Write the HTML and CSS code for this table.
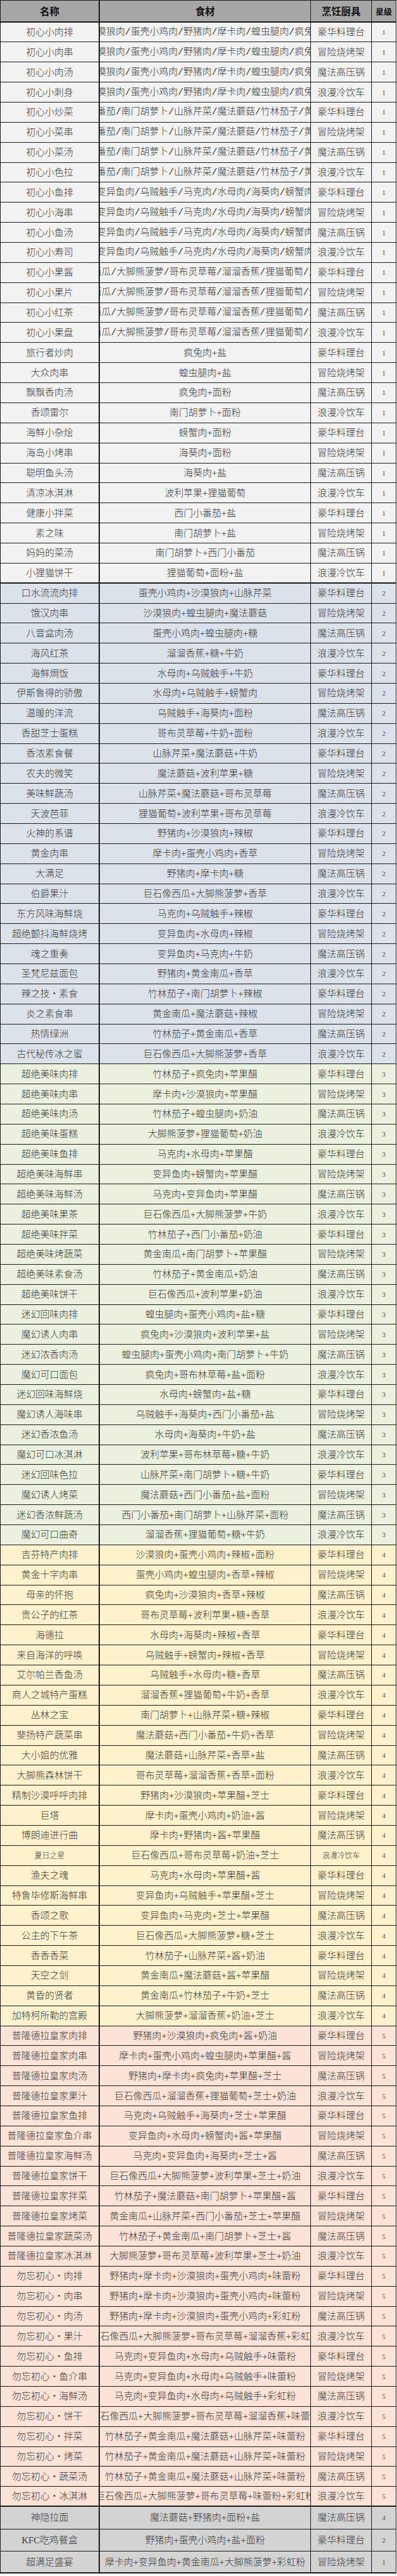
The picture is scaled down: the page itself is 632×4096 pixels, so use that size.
FILE: index.html
```html
<!DOCTYPE html>
<html lang="zh-CN">
<head>
<meta charset="utf-8">
<title>料理配方</title>
<link rel="stylesheet" href="styles.css">
</head>
<body>
<div class="sheet">
  <div class="row head"><div class="cell name">名称</div><div class="cell ing">食材</div><div class="cell tool">烹饪厨具</div><div class="cell star">星级</div></div>

  <div class="row s1"><div class="cell name">初心小肉排</div><div class="cell ing multi">沙漠狼肉/蛋壳小鸡肉/野猪肉/摩卡肉/蝗虫腿肉/疯兔肉</div><div class="cell tool">豪华料理台</div><div class="cell star">1</div></div>
  <div class="row s1"><div class="cell name">初心小肉串</div><div class="cell ing multi">沙漠狼肉/蛋壳小鸡肉/野猪肉/摩卡肉/蝗虫腿肉/疯兔肉</div><div class="cell tool">冒险烧烤架</div><div class="cell star">1</div></div>
  <div class="row s1"><div class="cell name">初心小肉汤</div><div class="cell ing multi">沙漠狼肉/蛋壳小鸡肉/野猪肉/摩卡肉/蝗虫腿肉/疯兔肉</div><div class="cell tool">魔法高压锅</div><div class="cell star">1</div></div>
  <div class="row s1"><div class="cell name">初心小刺身</div><div class="cell ing multi">沙漠狼肉/蛋壳小鸡肉/野猪肉/摩卡肉/蝗虫腿肉/疯兔肉</div><div class="cell tool">浪漫冷饮车</div><div class="cell star">1</div></div>
  <div class="row s1"><div class="cell name">初心小炒菜</div><div class="cell ing multi">西门小番茄/南门胡萝卜/山脉芹菜/魔法蘑菇/竹林茄子/黄金南瓜</div><div class="cell tool">豪华料理台</div><div class="cell star">1</div></div>
  <div class="row s1"><div class="cell name">初心小菜串</div><div class="cell ing multi">西门小番茄/南门胡萝卜/山脉芹菜/魔法蘑菇/竹林茄子/黄金南瓜</div><div class="cell tool">冒险烧烤架</div><div class="cell star">1</div></div>
  <div class="row s1"><div class="cell name">初心小菜汤</div><div class="cell ing multi">西门小番茄/南门胡萝卜/山脉芹菜/魔法蘑菇/竹林茄子/黄金南瓜</div><div class="cell tool">魔法高压锅</div><div class="cell star">1</div></div>
  <div class="row s1"><div class="cell name">初心小色拉</div><div class="cell ing multi">西门小番茄/南门胡萝卜/山脉芹菜/魔法蘑菇/竹林茄子/黄金南瓜</div><div class="cell tool">浪漫冷饮车</div><div class="cell star">1</div></div>
  <div class="row s1"><div class="cell name">初心小鱼排</div><div class="cell ing multi">变异鱼肉/乌贼触手/马克肉/水母肉/海葵肉/螃蟹肉</div><div class="cell tool">豪华料理台</div><div class="cell star">1</div></div>
  <div class="row s1"><div class="cell name">初心小海串</div><div class="cell ing multi">变异鱼肉/乌贼触手/马克肉/水母肉/海葵肉/螃蟹肉</div><div class="cell tool">冒险烧烤架</div><div class="cell star">1</div></div>
  <div class="row s1"><div class="cell name">初心小鱼汤</div><div class="cell ing multi">变异鱼肉/乌贼触手/马克肉/水母肉/海葵肉/螃蟹肉</div><div class="cell tool">魔法高压锅</div><div class="cell star">1</div></div>
  <div class="row s1"><div class="cell name">初心小寿司</div><div class="cell ing multi">变异鱼肉/乌贼触手/马克肉/水母肉/海葵肉/螃蟹肉</div><div class="cell tool">浪漫冷饮车</div><div class="cell star">1</div></div>
  <div class="row s1"><div class="cell name">初心小果酱</div><div class="cell ing multi">巨石像西瓜/大脚熊菠萝/哥布灵草莓/溜溜香蕉/狸猫葡萄/波利苹果</div><div class="cell tool">豪华料理台</div><div class="cell star">1</div></div>
  <div class="row s1"><div class="cell name">初心小果片</div><div class="cell ing multi">巨石像西瓜/大脚熊菠萝/哥布灵草莓/溜溜香蕉/狸猫葡萄/波利苹果</div><div class="cell tool">冒险烧烤架</div><div class="cell star">1</div></div>
  <div class="row s1"><div class="cell name">初心小红茶</div><div class="cell ing multi">巨石像西瓜/大脚熊菠萝/哥布灵草莓/溜溜香蕉/狸猫葡萄/波利苹果</div><div class="cell tool">魔法高压锅</div><div class="cell star">1</div></div>
  <div class="row s1"><div class="cell name">初心小果盘</div><div class="cell ing multi">巨石像西瓜/大脚熊菠萝/哥布灵草莓/溜溜香蕉/狸猫葡萄/波利苹果</div><div class="cell tool">浪漫冷饮车</div><div class="cell star">1</div></div>
  <div class="row s1"><div class="cell name">旅行者炒肉</div><div class="cell ing">疯兔肉+盐</div><div class="cell tool">豪华料理台</div><div class="cell star">1</div></div>
  <div class="row s1"><div class="cell name">大众肉串</div><div class="cell ing">蝗虫腿肉+盐</div><div class="cell tool">冒险烧烤架</div><div class="cell star">1</div></div>
  <div class="row s1"><div class="cell name">飘飘香肉汤</div><div class="cell ing">疯兔肉+面粉</div><div class="cell tool">魔法高压锅</div><div class="cell star">1</div></div>
  <div class="row s1"><div class="cell name">香颂雷尔</div><div class="cell ing">南门胡萝卜+面粉</div><div class="cell tool">浪漫冷饮车</div><div class="cell star">1</div></div>
  <div class="row s1"><div class="cell name">海鲜小杂烩</div><div class="cell ing">螃蟹肉+面粉</div><div class="cell tool">豪华料理台</div><div class="cell star">1</div></div>
  <div class="row s1"><div class="cell name">海岛小烤串</div><div class="cell ing">海葵肉+面粉</div><div class="cell tool">冒险烧烤架</div><div class="cell star">1</div></div>
  <div class="row s1"><div class="cell name">聪明鱼头汤</div><div class="cell ing">海葵肉+盐</div><div class="cell tool">魔法高压锅</div><div class="cell star">1</div></div>
  <div class="row s1"><div class="cell name">清凉冰淇淋</div><div class="cell ing">波利苹果+狸猫葡萄</div><div class="cell tool">浪漫冷饮车</div><div class="cell star">1</div></div>
  <div class="row s1"><div class="cell name">健康小拌菜</div><div class="cell ing">西门小番茄+盐</div><div class="cell tool">豪华料理台</div><div class="cell star">1</div></div>
  <div class="row s1"><div class="cell name">素之味</div><div class="cell ing">南门胡萝卜+盐</div><div class="cell tool">冒险烧烤架</div><div class="cell star">1</div></div>
  <div class="row s1"><div class="cell name">妈妈的菜汤</div><div class="cell ing">南门胡萝卜+西门小番茄</div><div class="cell tool">魔法高压锅</div><div class="cell star">1</div></div>
  <div class="row s1 end"><div class="cell name">小狸猫饼干</div><div class="cell ing">狸猫葡萄+面粉+盐</div><div class="cell tool">浪漫冷饮车</div><div class="cell star">1</div></div>

  <div class="row s2"><div class="cell name">口水流流肉排</div><div class="cell ing">蛋壳小鸡肉+沙漠狼肉+山脉芹菜</div><div class="cell tool">豪华料理台</div><div class="cell star">2</div></div>
  <div class="row s2"><div class="cell name">饿汉肉串</div><div class="cell ing">沙漠狼肉+蝗虫腿肉+魔法蘑菇</div><div class="cell tool">冒险烧烤架</div><div class="cell star">2</div></div>
  <div class="row s2"><div class="cell name">八音盒肉汤</div><div class="cell ing">蛋壳小鸡肉+蝗虫腿肉+糖</div><div class="cell tool">魔法高压锅</div><div class="cell star">2</div></div>
  <div class="row s2"><div class="cell name">海风红茶</div><div class="cell ing">溜溜香蕉+糖+牛奶</div><div class="cell tool">浪漫冷饮车</div><div class="cell star">2</div></div>
  <div class="row s2"><div class="cell name">海鲜焗饭</div><div class="cell ing">水母肉+乌贼触手+牛奶</div><div class="cell tool">豪华料理台</div><div class="cell star">2</div></div>
  <div class="row s2"><div class="cell name">伊斯鲁得的骄傲</div><div class="cell ing">水母肉+乌贼触手+螃蟹肉</div><div class="cell tool">冒险烧烤架</div><div class="cell star">2</div></div>
  <div class="row s2"><div class="cell name">温暖的洋流</div><div class="cell ing">乌贼触手+海葵肉+面粉</div><div class="cell tool">魔法高压锅</div><div class="cell star">2</div></div>
  <div class="row s2"><div class="cell name">香甜芝士蛋糕</div><div class="cell ing">哥布灵草莓+牛奶+面粉</div><div class="cell tool">浪漫冷饮车</div><div class="cell star">2</div></div>
  <div class="row s2"><div class="cell name">香浓素食餐</div><div class="cell ing">山脉芹菜+魔法蘑菇+牛奶</div><div class="cell tool">豪华料理台</div><div class="cell star">2</div></div>
  <div class="row s2"><div class="cell name">农夫的微笑</div><div class="cell ing">魔法蘑菇+波利苹果+糖</div><div class="cell tool">冒险烧烤架</div><div class="cell star">2</div></div>
  <div class="row s2"><div class="cell name">美味鲜蔬汤</div><div class="cell ing">山脉芹菜+魔法蘑菇+哥布灵草莓</div><div class="cell tool">魔法高压锅</div><div class="cell star">2</div></div>
  <div class="row s2"><div class="cell name">天波芭菲</div><div class="cell ing">狸猫葡萄+波利苹果+哥布灵草莓</div><div class="cell tool">浪漫冷饮车</div><div class="cell star">2</div></div>
  <div class="row s2"><div class="cell name">火神的系谱</div><div class="cell ing">野猪肉+沙漠狼肉+辣椒</div><div class="cell tool">豪华料理台</div><div class="cell star">2</div></div>
  <div class="row s2"><div class="cell name">黄金肉串</div><div class="cell ing">摩卡肉+蛋壳小鸡肉+香草</div><div class="cell tool">冒险烧烤架</div><div class="cell star">2</div></div>
  <div class="row s2"><div class="cell name">大满足</div><div class="cell ing">野猪肉+摩卡肉+糖</div><div class="cell tool">魔法高压锅</div><div class="cell star">2</div></div>
  <div class="row s2"><div class="cell name">伯爵果汁</div><div class="cell ing">巨石像西瓜+大脚熊菠萝+香草</div><div class="cell tool">浪漫冷饮车</div><div class="cell star">2</div></div>
  <div class="row s2"><div class="cell name">东方风味海鲜烧</div><div class="cell ing">马克肉+乌贼触手+辣椒</div><div class="cell tool">豪华料理台</div><div class="cell star">2</div></div>
  <div class="row s2"><div class="cell name">超绝颤抖海鲜烧烤</div><div class="cell ing">变异鱼肉+水母肉+辣椒</div><div class="cell tool">冒险烧烤架</div><div class="cell star">2</div></div>
  <div class="row s2"><div class="cell name">魂之重奏</div><div class="cell ing">变异鱼肉+马克肉+牛奶</div><div class="cell tool">魔法高压锅</div><div class="cell star">2</div></div>
  <div class="row s2"><div class="cell name">圣梵尼兹面包</div><div class="cell ing">野猪肉+黄金南瓜+香草</div><div class="cell tool">浪漫冷饮车</div><div class="cell star">2</div></div>
  <div class="row s2"><div class="cell name">辣之技・素食</div><div class="cell ing">竹林茄子+南门胡萝卜+辣椒</div><div class="cell tool">豪华料理台</div><div class="cell star">2</div></div>
  <div class="row s2"><div class="cell name">炎之素食串</div><div class="cell ing">黄金南瓜+魔法蘑菇+辣椒</div><div class="cell tool">冒险烧烤架</div><div class="cell star">2</div></div>
  <div class="row s2"><div class="cell name">热情绿洲</div><div class="cell ing">竹林茄子+黄金南瓜+香草</div><div class="cell tool">魔法高压锅</div><div class="cell star">2</div></div>
  <div class="row s2"><div class="cell name">古代秘传冰之蜜</div><div class="cell ing">巨石像西瓜+大脚熊菠萝+香草</div><div class="cell tool">浪漫冷饮车</div><div class="cell star">2</div></div>

  <div class="row s3"><div class="cell name">超绝美味肉排</div><div class="cell ing">竹林茄子+疯兔肉+苹果醋</div><div class="cell tool">豪华料理台</div><div class="cell star">3</div></div>
  <div class="row s3"><div class="cell name">超绝美味肉串</div><div class="cell ing">摩卡肉+沙漠狼肉+苹果醋</div><div class="cell tool">冒险烧烤架</div><div class="cell star">3</div></div>
  <div class="row s3"><div class="cell name">超绝美味肉汤</div><div class="cell ing">竹林茄子+蝗虫腿肉+奶油</div><div class="cell tool">魔法高压锅</div><div class="cell star">3</div></div>
  <div class="row s3"><div class="cell name">超绝美味蛋糕</div><div class="cell ing">大脚熊菠萝+狸猫葡萄+奶油</div><div class="cell tool">浪漫冷饮车</div><div class="cell star">3</div></div>
  <div class="row s3"><div class="cell name">超绝美味鱼排</div><div class="cell ing">马克肉+水母肉+苹果醋</div><div class="cell tool">豪华料理台</div><div class="cell star">3</div></div>
  <div class="row s3"><div class="cell name">超绝美味海鲜串</div><div class="cell ing">变异鱼肉+螃蟹肉+苹果醋</div><div class="cell tool">冒险烧烤架</div><div class="cell star">3</div></div>
  <div class="row s3"><div class="cell name">超绝美味海鲜汤</div><div class="cell ing">马克肉+变异鱼肉+苹果醋</div><div class="cell tool">魔法高压锅</div><div class="cell star">3</div></div>
  <div class="row s3"><div class="cell name">超绝美味果茶</div><div class="cell ing">巨石像西瓜+大脚熊菠萝+牛奶</div><div class="cell tool">浪漫冷饮车</div><div class="cell star">3</div></div>
  <div class="row s3"><div class="cell name">超绝美味拌菜</div><div class="cell ing">竹林茄子+西门小番茄+奶油</div><div class="cell tool">豪华料理台</div><div class="cell star">3</div></div>
  <div class="row s3"><div class="cell name">超绝美味烤蔬菜</div><div class="cell ing">黄金南瓜+南门胡萝卜+苹果醋</div><div class="cell tool">冒险烧烤架</div><div class="cell star">3</div></div>
  <div class="row s3"><div class="cell name">超绝美味素食汤</div><div class="cell ing">竹林茄子+黄金南瓜+奶油</div><div class="cell tool">魔法高压锅</div><div class="cell star">3</div></div>
  <div class="row s3"><div class="cell name">超绝美味饼干</div><div class="cell ing">巨石像西瓜+波利苹果+奶油</div><div class="cell tool">浪漫冷饮车</div><div class="cell star">3</div></div>
  <div class="row s3"><div class="cell name">迷幻回味肉排</div><div class="cell ing">蝗虫腿肉+蛋壳小鸡肉+盐+糖</div><div class="cell tool">豪华料理台</div><div class="cell star">3</div></div>
  <div class="row s3"><div class="cell name">魔幻诱人肉串</div><div class="cell ing">疯兔肉+沙漠狼肉+波利苹果+盐</div><div class="cell tool">冒险烧烤架</div><div class="cell star">3</div></div>
  <div class="row s3"><div class="cell name">迷幻浓香肉汤</div><div class="cell ing">蝗虫腿肉+蛋壳小鸡肉+南门胡萝卜+牛奶</div><div class="cell tool">魔法高压锅</div><div class="cell star">3</div></div>
  <div class="row s3"><div class="cell name">魔幻可口面包</div><div class="cell ing">疯兔肉+哥布林草莓+盐+面粉</div><div class="cell tool">浪漫冷饮车</div><div class="cell star">3</div></div>
  <div class="row s3"><div class="cell name">迷幻回味海鲜烧</div><div class="cell ing">水母肉+螃蟹肉+盐+糖</div><div class="cell tool">豪华料理台</div><div class="cell star">3</div></div>
  <div class="row s3"><div class="cell name">魔幻诱人海味串</div><div class="cell ing">乌贼触手+海葵肉+西门小番茄+盐</div><div class="cell tool">冒险烧烤架</div><div class="cell star">3</div></div>
  <div class="row s3"><div class="cell name">迷幻香浓鱼汤</div><div class="cell ing">水母肉+海葵肉+牛奶+盐</div><div class="cell tool">魔法高压锅</div><div class="cell star">3</div></div>
  <div class="row s3"><div class="cell name">魔幻可口冰淇淋</div><div class="cell ing">波利苹果+哥布林草莓+糖+牛奶</div><div class="cell tool">浪漫冷饮车</div><div class="cell star">3</div></div>
  <div class="row s3"><div class="cell name">迷幻回味色拉</div><div class="cell ing">山脉芹菜+南门胡萝卜+糖+牛奶</div><div class="cell tool">豪华料理台</div><div class="cell star">3</div></div>
  <div class="row s3"><div class="cell name">魔幻诱人烤菜</div><div class="cell ing">魔法蘑菇+西门小番茄+盐+面粉</div><div class="cell tool">冒险烧烤架</div><div class="cell star">3</div></div>
  <div class="row s3"><div class="cell name">迷幻香浓鲜蔬汤</div><div class="cell ing">西门小番茄+南门胡萝卜+山脉芹菜+面粉</div><div class="cell tool">魔法高压锅</div><div class="cell star">3</div></div>
  <div class="row s3"><div class="cell name">魔幻可口曲奇</div><div class="cell ing">溜溜香蕉+狸猫葡萄+糖+牛奶</div><div class="cell tool">浪漫冷饮车</div><div class="cell star">3</div></div>

  <div class="row s4"><div class="cell name">吉芬特产肉排</div><div class="cell ing">沙漠狼肉+蛋壳小鸡肉+辣椒+面粉</div><div class="cell tool">豪华料理台</div><div class="cell star">4</div></div>
  <div class="row s4"><div class="cell name">黄金十字肉串</div><div class="cell ing">蛋壳小鸡肉+蝗虫腿肉+香草+辣椒</div><div class="cell tool">冒险烧烤架</div><div class="cell star">4</div></div>
  <div class="row s4"><div class="cell name">母亲的怀抱</div><div class="cell ing">疯兔肉+沙漠狼肉+香草+辣椒</div><div class="cell tool">魔法高压锅</div><div class="cell star">4</div></div>
  <div class="row s4"><div class="cell name">贵公子的红茶</div><div class="cell ing">哥布灵草莓+波利苹果+糖+香草</div><div class="cell tool">浪漫冷饮车</div><div class="cell star">4</div></div>
  <div class="row s4"><div class="cell name">海德拉</div><div class="cell ing">水母肉+海葵肉+辣椒+香草</div><div class="cell tool">豪华料理台</div><div class="cell star">4</div></div>
  <div class="row s4"><div class="cell name">来自海洋的呼唤</div><div class="cell ing">乌贼触手+螃蟹肉+辣椒+香草</div><div class="cell tool">冒险烧烤架</div><div class="cell star">4</div></div>
  <div class="row s4"><div class="cell name">艾尔帕兰香鱼汤</div><div class="cell ing">乌贼触手+水母肉+糖+香草</div><div class="cell tool">魔法高压锅</div><div class="cell star">4</div></div>
  <div class="row s4"><div class="cell name">商人之城特产蛋糕</div><div class="cell ing">溜溜香蕉+狸猫葡萄+牛奶+香草</div><div class="cell tool">浪漫冷饮车</div><div class="cell star">4</div></div>
  <div class="row s4"><div class="cell name">丛林之宝</div><div class="cell ing">南门胡萝卜+山脉芹菜+糖+辣椒</div><div class="cell tool">豪华料理台</div><div class="cell star">4</div></div>
  <div class="row s4"><div class="cell name">斐扬特产蔬菜串</div><div class="cell ing">魔法蘑菇+西门小番茄+牛奶+香草</div><div class="cell tool">冒险烧烤架</div><div class="cell star">4</div></div>
  <div class="row s4"><div class="cell name">大小姐的优雅</div><div class="cell ing">魔法蘑菇+山脉芹菜+香草+盐</div><div class="cell tool">魔法高压锅</div><div class="cell star">4</div></div>
  <div class="row s4"><div class="cell name">大脚熊森林饼干</div><div class="cell ing">哥布灵草莓+溜溜香蕉+香草+面粉</div><div class="cell tool">浪漫冷饮车</div><div class="cell star">4</div></div>
  <div class="row s4"><div class="cell name">精制沙漠呼呼肉排</div><div class="cell ing">野猪肉+沙漠狼肉+苹果醋+芝士</div><div class="cell tool">豪华料理台</div><div class="cell star">4</div></div>
  <div class="row s4"><div class="cell name">巨塔</div><div class="cell ing">摩卡肉+蛋壳小鸡肉+奶油+酱</div><div class="cell tool">冒险烧烤架</div><div class="cell star">4</div></div>
  <div class="row s4"><div class="cell name">博朗迪进行曲</div><div class="cell ing">摩卡肉+野猪肉+酱+苹果醋</div><div class="cell tool">魔法高压锅</div><div class="cell star">4</div></div>
  <div class="row s4"><div class="cell name small">夏日之星</div><div class="cell ing">巨石像西瓜+哥布灵草莓+奶油+芝士</div><div class="cell tool small">浪漫冷饮车</div><div class="cell star">4</div></div>
  <div class="row s4"><div class="cell name">渔夫之魂</div><div class="cell ing">马克肉+水母肉+苹果醋+酱</div><div class="cell tool">豪华料理台</div><div class="cell star">4</div></div>
  <div class="row s4"><div class="cell name">特鲁毕修斯海鲜串</div><div class="cell ing">变异鱼肉+乌贼触手+苹果醋+芝士</div><div class="cell tool">冒险烧烤架</div><div class="cell star">4</div></div>
  <div class="row s4"><div class="cell name">香颂之歌</div><div class="cell ing">变异鱼肉+马克肉+芝士+苹果醋</div><div class="cell tool">魔法高压锅</div><div class="cell star">4</div></div>
  <div class="row s4"><div class="cell name">公主的下午茶</div><div class="cell ing">巨石像西瓜+大脚熊菠萝+糖+芝士</div><div class="cell tool">浪漫冷饮车</div><div class="cell star">4</div></div>
  <div class="row s4"><div class="cell name">香香香菜</div><div class="cell ing">竹林茄子+山脉芹菜+酱+奶油</div><div class="cell tool">豪华料理台</div><div class="cell star">4</div></div>
  <div class="row s4"><div class="cell name">天空之剑</div><div class="cell ing">黄金南瓜+魔法蘑菇+酱+苹果醋</div><div class="cell tool">冒险烧烤架</div><div class="cell star">4</div></div>
  <div class="row s4"><div class="cell name">黄昏的贤者</div><div class="cell ing">黄金南瓜+竹林茄子+牛奶+芝士</div><div class="cell tool">魔法高压锅</div><div class="cell star">4</div></div>
  <div class="row s4"><div class="cell name">加特柯所勒的宫殿</div><div class="cell ing">大脚熊菠萝+溜溜香蕉+奶油+芝士</div><div class="cell tool">浪漫冷饮车</div><div class="cell star">4</div></div>

  <div class="row s5"><div class="cell name">普隆德拉皇家肉排</div><div class="cell ing">野猪肉+沙漠狼肉+疯兔肉+酱+奶油</div><div class="cell tool">豪华料理台</div><div class="cell star">5</div></div>
  <div class="row s5"><div class="cell name">普隆德拉皇家肉串</div><div class="cell ing">摩卡肉+蛋壳小鸡肉+蝗虫腿肉+苹果醋+酱</div><div class="cell tool">冒险烧烤架</div><div class="cell star">5</div></div>
  <div class="row s5"><div class="cell name">普隆德拉皇家肉汤</div><div class="cell ing">野猪肉+摩卡肉+疯兔肉+苹果醋+芝士</div><div class="cell tool">魔法高压锅</div><div class="cell star">5</div></div>
  <div class="row s5"><div class="cell name">普隆德拉皇家果汁</div><div class="cell ing">巨石像西瓜+溜溜香蕉+狸猫葡萄+芝士+奶油</div><div class="cell tool">浪漫冷饮车</div><div class="cell star">5</div></div>
  <div class="row s5"><div class="cell name">普隆德拉皇家鱼排</div><div class="cell ing">马克肉+乌贼触手+海葵肉+芝士+苹果醋</div><div class="cell tool">豪华料理台</div><div class="cell star">5</div></div>
  <div class="row s5"><div class="cell name">普隆德拉皇家鱼介串</div><div class="cell ing">变异鱼肉+水母肉+螃蟹肉+酱+苹果醋</div><div class="cell tool">冒险烧烤架</div><div class="cell star">5</div></div>
  <div class="row s5"><div class="cell name">普隆德拉皇家海鲜汤</div><div class="cell ing">马克肉+变异鱼肉+海葵肉+芝士+酱</div><div class="cell tool">魔法高压锅</div><div class="cell star">5</div></div>
  <div class="row s5"><div class="cell name">普隆德拉皇家饼干</div><div class="cell ing">巨石像西瓜+大脚熊菠萝+波利苹果+芝士+奶油</div><div class="cell tool">浪漫冷饮车</div><div class="cell star">5</div></div>
  <div class="row s5"><div class="cell name">普隆德拉皇家拌菜</div><div class="cell ing">竹林茄子+魔法蘑菇+南门胡萝卜+苹果醋+酱</div><div class="cell tool">豪华料理台</div><div class="cell star">5</div></div>
  <div class="row s5"><div class="cell name">普隆德拉皇家烤菜</div><div class="cell ing">黄金南瓜+山脉芹菜+西门小番茄+芝士+苹果醋</div><div class="cell tool">冒险烧烤架</div><div class="cell star">5</div></div>
  <div class="row s5"><div class="cell name">普隆德拉皇家蔬菜汤</div><div class="cell ing">竹林茄子+黄金南瓜+南门胡萝卜+芝士+酱</div><div class="cell tool">魔法高压锅</div><div class="cell star">5</div></div>
  <div class="row s5"><div class="cell name">普隆德拉皇家冰淇淋</div><div class="cell ing">大脚熊菠萝+哥布灵草莓+波利苹果+芝士+奶油</div><div class="cell tool">浪漫冷饮车</div><div class="cell star">5</div></div>
  <div class="row s5"><div class="cell name">勿忘初心・肉排</div><div class="cell ing">野猪肉+摩卡肉+沙漠狼肉+蛋壳小鸡肉+味蕾粉</div><div class="cell tool">豪华料理台</div><div class="cell star">5</div></div>
  <div class="row s5"><div class="cell name">勿忘初心・肉串</div><div class="cell ing">野猪肉+摩卡肉+沙漠狼肉+蛋壳小鸡肉+味蕾粉</div><div class="cell tool">冒险烧烤架</div><div class="cell star">5</div></div>
  <div class="row s5"><div class="cell name">勿忘初心・肉汤</div><div class="cell ing">野猪肉+摩卡肉+沙漠狼肉+蛋壳小鸡肉+彩虹粉</div><div class="cell tool">魔法高压锅</div><div class="cell star">5</div></div>
  <div class="row s5"><div class="cell name">勿忘初心・果汁</div><div class="cell ing">巨石像西瓜+大脚熊菠萝+哥布灵草莓+溜溜香蕉+彩虹粉</div><div class="cell tool">浪漫冷饮车</div><div class="cell star">5</div></div>
  <div class="row s5"><div class="cell name">勿忘初心・鱼排</div><div class="cell ing">马克肉+变异鱼肉+水母肉+乌贼触手+味蕾粉</div><div class="cell tool">豪华料理台</div><div class="cell star">5</div></div>
  <div class="row s5"><div class="cell name">勿忘初心・鱼介串</div><div class="cell ing">马克肉+变异鱼肉+水母肉+乌贼触手+味蕾粉</div><div class="cell tool">冒险烧烤架</div><div class="cell star">5</div></div>
  <div class="row s5"><div class="cell name">勿忘初心・海鲜汤</div><div class="cell ing">马克肉+变异鱼肉+水母肉+乌贼触手+彩虹粉</div><div class="cell tool">魔法高压锅</div><div class="cell star">5</div></div>
  <div class="row s5"><div class="cell name">勿忘初心・饼干</div><div class="cell ing">巨石像西瓜+大脚熊菠萝+哥布灵草莓+溜溜香蕉+味蕾粉</div><div class="cell tool">浪漫冷饮车</div><div class="cell star">5</div></div>
  <div class="row s5"><div class="cell name">勿忘初心・拌菜</div><div class="cell ing">竹林茄子+黄金南瓜+魔法蘑菇+山脉芹菜+味蕾粉</div><div class="cell tool">豪华料理台</div><div class="cell star">5</div></div>
  <div class="row s5"><div class="cell name">勿忘初心・烤菜</div><div class="cell ing">竹林茄子+黄金南瓜+魔法蘑菇+山脉芹菜+味蕾粉</div><div class="cell tool">冒险烧烤架</div><div class="cell star">5</div></div>
  <div class="row s5"><div class="cell name">勿忘初心・蔬菜汤</div><div class="cell ing">竹林茄子+黄金南瓜+魔法蘑菇+山脉芹菜+味蕾粉</div><div class="cell tool">魔法高压锅</div><div class="cell star">5</div></div>
  <div class="row s5 end"><div class="cell name">勿忘初心・冰淇淋</div><div class="cell ing">巨石像西瓜+大脚熊菠萝+哥布灵草莓+味蕾粉+彩虹粉</div><div class="cell tool">浪漫冷饮车</div><div class="cell star">5</div></div>

  <div class="row sx"><div class="cell name">神隐拉面</div><div class="cell ing">魔法蘑菇+野猪肉+面粉+盐</div><div class="cell tool">魔法高压锅</div><div class="cell star">4</div></div>
  <div class="row sx"><div class="cell name">KFC吃鸡餐盒</div><div class="cell ing">野猪肉+蛋壳小鸡肉+盐+面粉</div><div class="cell tool">豪华料理台</div><div class="cell star">2</div></div>
  <div class="row sx last"><div class="cell name">超满足盛宴</div><div class="cell ing">摩卡肉+变异鱼肉+黄金南瓜+大脚熊菠萝+彩虹粉</div><div class="cell tool">冒险烧烤架</div><div class="cell star">1</div></div>
</div>
</body>
</html>
```

FILE: styles.css
```css
html, body {
  margin: 0;
  padding: 0;
  background: #ffffff;
}

.sheet {
  width: 631px;
  box-sizing: border-box;
  border-left: 1px solid #1a1a1a;
  border-top: 1px solid #1a1a1a;
  font-family: "Liberation Serif", "Noto Sans CJK SC", sans-serif;
  color: #3a3a3a;
}

.row {
  display: grid;
  grid-template-columns: 158px 336px 97px 39px;
  height: 31.86px;
}

.cell {
  box-sizing: border-box;
  display: flex;
  align-items: center;
  justify-content: center;
  overflow: hidden;
  white-space: nowrap;
  border-right: 1px solid #1a1a1a;
  border-bottom: 1px solid #1a1a1a;
  font-size: 15px;
  font-weight: 300;
  line-height: 1;
  padding-top: 1px;
}

.cell.name {
  border-right-width: 2px;
}

.cell.star {
  font-family: "Liberation Serif", serif;
  font-size: 11px;
  color: #4a4a4a;
  border-right-width: 1.5px;
}

.cell.multi {
  font-family: "Liberation Mono", "Noto Sans CJK SC", monospace;
  justify-content: center;
}

.cell.small {
  font-size: 12px;
}

.row.head {
  height: 34.6px;
  background: #a6a6a6;
}

.row.head .cell {
  font-family: "Noto Sans CJK SC", sans-serif;
  font-weight: 700;
  font-size: 15.5px;
  color: #111;
  border-bottom-width: 2px;
}

.row.head .cell.star {
  font-size: 13px;
}

.row.end .cell {
  border-bottom-width: 2px;
}

.s1 { background: #f2f2f2; }
.s2 { background: #dce2ea; }
.s3 { background: #ebf1de; }
.s4 { background: #fef2cc; }
.s5 { background: #fbe3d7; }
.sx { background: #d3d3d3; height: 35.4px; }

.row.last .cell {
  border-bottom-width: 2px;
}
```
